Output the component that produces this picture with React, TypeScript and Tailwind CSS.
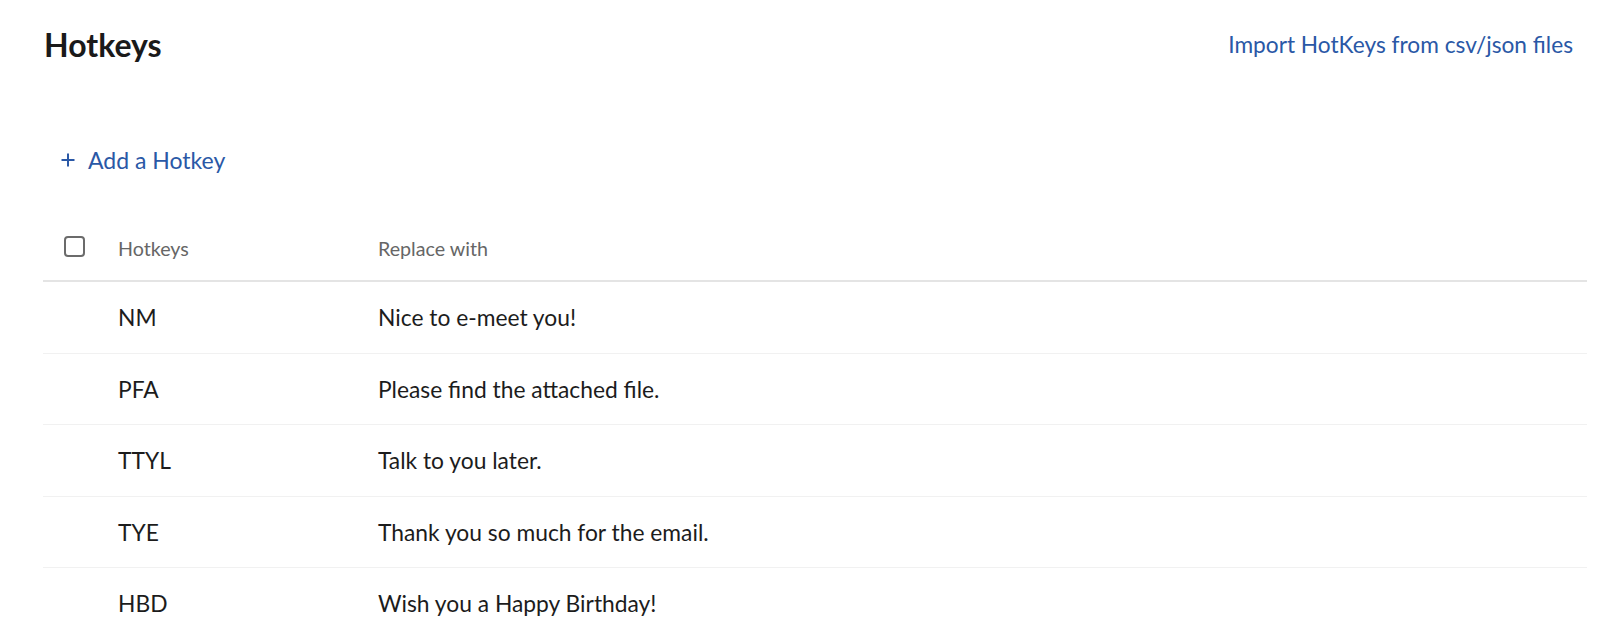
import React from "react";

interface iHotkey {
	key: string;
	text: string;
}

const hotkeys: iHotkey[] = [
	{key: "NM", text: "Nice to e-meet you!"},
	{key: "PFA", text: "Please find the attached file."},
	{key: "TTYL", text: "Talk to you later."},
	{key: "TYE", text: "Thank you so much for the email."},
	{key: "HBD", text: "Wish you a Happy Birthday!"},
];

const PlusIcon: React.FC = () => (
	<svg width="14" height="14" viewBox="0 0 14 14" fill="none" stroke="currentColor" strokeWidth="2">
		<line x1="7" y1="0.5" x2="7" y2="13.5" />
		<line x1="0.5" y1="7" x2="13.5" y2="7" />
	</svg>
);

const App: React.FC = () => {
	return (
		<div className="h-screen overflow-hidden bg-white font-['Lato','Noto_Sans',sans-serif] text-[#1c1c1c]">
			<div className="pl-[43px] pr-[13px]">
				{/* Title bar */}
				<div className="flex h-[90px] items-center justify-between pr-[14px]">
					<h1 className="pl-[1px] text-[32px] font-bold leading-none text-[#1a1a1a]">Hotkeys</h1>
					<a className="text-[22.7px] leading-none text-[#2a58a6] cursor-pointer">
						Import HotKeys from csv/json files
					</a>
				</div>

				{/* Add button */}
				<div className="mt-[46px] flex h-[48px] items-center gap-[13px] pl-[18px] text-[#2a58a6] cursor-pointer">
					<PlusIcon />
					<span className="text-[23px] leading-none">Add a Hotkey</span>
				</div>

				{/* Table */}
				<div className="mt-[42px]">
					<div className="flex h-[56px] items-start border-b-2 border-[#e4e4e4] pt-[10px]">
						<div className="w-[75px] pl-[21px]">
							<div className="h-[21px] w-[21px] rounded-[4px] border-2 border-[#6b6b6b]"></div>
						</div>
						<div className="w-[260px] text-[19.7px] leading-[26px] text-[#666666]">Hotkeys</div>
						<div className="text-[19.7px] leading-[26px] text-[#666666]">Replace with</div>
					</div>
					{hotkeys.map((row) => (
						<div
							key={row.key}
							className="flex h-[71.5px] items-center border-b border-[#f1f1f1] text-[22.8px]"
						>
							<div className="w-[75px]"></div>
							<div className="w-[260px]">{row.key}</div>
							<div>{row.text}</div>
						</div>
					))}
				</div>
			</div>
		</div>
	);
};

export default App;
